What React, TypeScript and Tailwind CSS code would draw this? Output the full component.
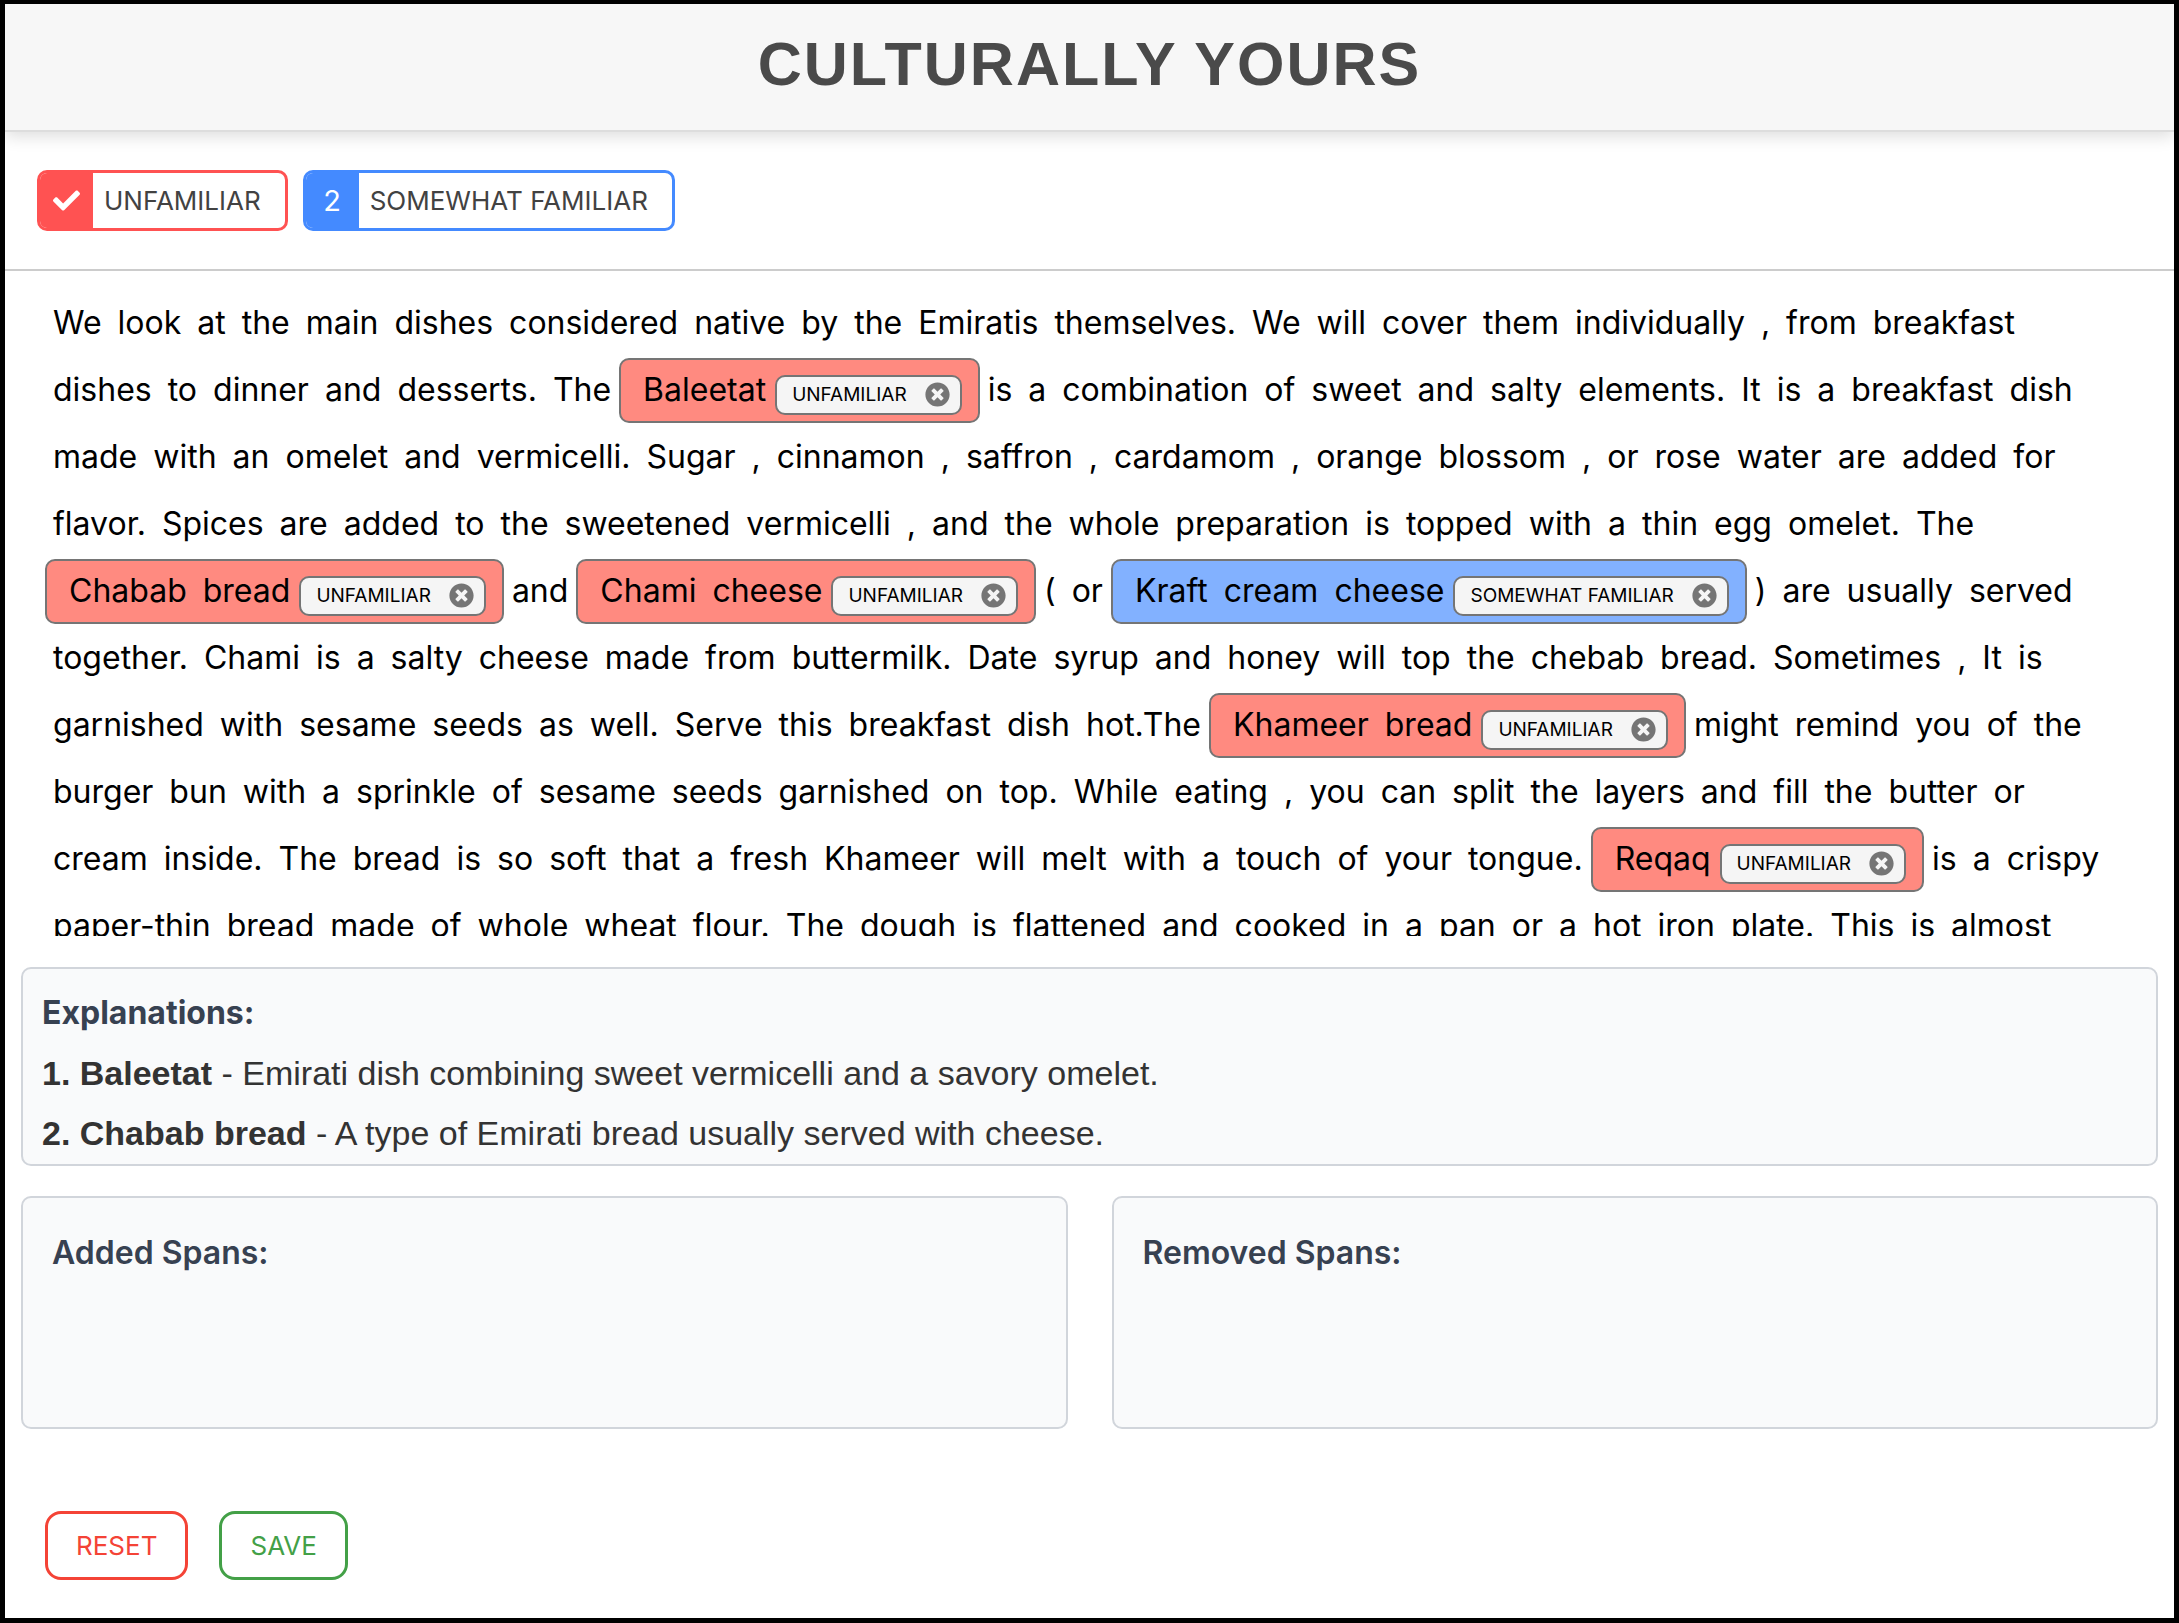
import React from "react";
import { FaCheck, FaTimesCircle } from "react-icons/fa";

type Level = "UNFAMILIAR" | "SOMEWHAT FAMILIAR";
type Segment = string | { text: string; level: Level };

const segments: Segment[] = [
  "We look at the main dishes considered native by the Emiratis themselves. We will cover them individually , from breakfast dishes to dinner and desserts. The",
  { text: "Baleetat", level: "UNFAMILIAR" },
  "is a combination of sweet and salty elements. It is a breakfast dish made with an omelet and vermicelli. Sugar , cinnamon , saffron , cardamom , orange blossom , or rose water are added for flavor. Spices are added to the sweetened vermicelli , and the whole preparation is topped with a thin egg omelet. The",
  { text: "Chabab bread", level: "UNFAMILIAR" },
  "and",
  { text: "Chami cheese", level: "UNFAMILIAR" },
  "( or",
  { text: "Kraft cream cheese", level: "SOMEWHAT FAMILIAR" },
  ") are usually served together. Chami is a salty cheese made from buttermilk. Date syrup and honey will top the chebab bread. Sometimes , It is garnished with sesame seeds as well. Serve this breakfast dish hot.The",
  { text: "Khameer bread", level: "UNFAMILIAR" },
  "might remind you of the burger bun with a sprinkle of sesame seeds garnished on top. While eating , you can split the layers and fill the butter or cream inside. The bread is so soft that a fresh Khameer will melt with a touch of your tongue.",
  { text: "Reqaq", level: "UNFAMILIAR" },
  "is a crispy paper-thin bread made of whole wheat flour. The dough is flattened and cooked in a pan or a hot iron plate. This is almost",
];

function Words({ text }: { text: string }) {
  return (
    <>
      {text.split(" ").map((word, i) => (
        <span key={i} className="px-2">
          {word}
        </span>
      ))}
    </>
  );
}

function Highlight({ text, level }: { text: string; level: Level }) {
  const color = level === "UNFAMILIAR" ? "bg-[#ff8a80]" : "bg-[#82b1ff]";
  return (
    <mark
      className={`mt-[2px] flex h-[65px] items-center rounded-[10px] border-2 border-[#757575] pr-4 pb-[2px] pl-[14px] text-black ${color}`}
    >
      <Words text={text} />
      <span className="mt-[10px] ml-px flex h-10 items-center gap-[18px] rounded-[10px] border-2 border-[#757575] bg-[#f5f5f5] pr-[10px] pl-[15px] text-[19px]">
        {level}
        <button type="button" aria-label={`Remove ${text}`} className="text-[#757575]">
          <FaTimesCircle size={25} />
        </button>
      </span>
    </mark>
  );
}

export default function App() {
  return (
    <div className="flex min-h-screen flex-col border-x-[5px] border-t-4 border-b-[5px] border-black bg-white font-['Inter',sans-serif]">
      <header className="flex h-32 items-center justify-center border-b-2 border-[#dddddd] bg-[#f7f7f7] pb-[6px] shadow-[0_4px_16px_rgba(0,0,0,0.14)]">
        <h1 className="font-['Liberation_Sans',sans-serif] text-[61px] leading-none font-bold tracking-[2px] text-[#4a4a4a]">
          CULTURALLY YOURS
        </h1>
      </header>

      <div className="flex gap-[15px] border-b-2 border-[#cccccc] px-8 py-[38px] text-[26px] text-[#424242]">
        <button
          type="button"
          aria-pressed="true"
          className="flex h-[61px] items-center overflow-hidden rounded-[10px] border-[3px] border-[#ff5252] pr-6"
        >
          <span className="mr-[11px] flex w-[53px] items-center justify-center self-stretch bg-[#ff5252] text-white">
            <FaCheck size={27} />
          </span>
          UNFAMILIAR
        </button>
        <button
          type="button"
          aria-pressed="false"
          className="flex h-[61px] items-center overflow-hidden rounded-[10px] border-[3px] border-[#448aff] pr-6"
        >
          <span className="mr-[11px] flex w-[53px] items-center justify-center self-stretch bg-[#448aff] text-[29px] text-white">
            2
          </span>
          SOMEWHAT FAMILIAR
        </button>
      </div>

      <main className="mt-[18px] mb-[31px] h-[647px] overflow-hidden pr-12 pl-10">
        <div className="flex flex-wrap text-[32px] leading-[67px] text-black">
          {segments.map((s, i) =>
            typeof s === "string" ? <Words key={i} text={s} /> : <Highlight key={i} {...s} />,
          )}
        </div>
      </main>

      <section className="mx-4 h-[199px] overflow-hidden rounded-[10px] border-2 border-[#d1d5db] bg-[#f9fafb] px-[19px] py-[14px] font-['Liberation_Sans',sans-serif] text-[34px] leading-[60px] text-[#333333]">
        <h2 className="font-['Inter',sans-serif] text-[32px] font-bold text-[#374151]">Explanations:</h2>
        <p>
          <b>1. Baleetat</b> - Emirati dish combining sweet vermicelli and a savory omelet.
        </p>
        <p>
          <b>2. Chabab bread</b> - A type of Emirati bread usually served with cheese.
        </p>
      </section>

      <div className="mx-4 mt-[30px] grid grid-cols-2 gap-11 text-[32px] text-[#374151]">
        <section className="h-[233px] rounded-[10px] border-2 border-[#d1d5db] bg-[#f9fafb] px-[29px] py-[31px]">
          <h2 className="font-semibold">Added Spans:</h2>
        </section>
        <section className="h-[233px] rounded-[10px] border-2 border-[#d1d5db] bg-[#f9fafb] px-[29px] py-[31px]">
          <h2 className="font-semibold">Removed Spans:</h2>
        </section>
      </div>

      <footer className="mt-[82px] flex gap-[31px] px-10 text-[26px]">
        <button type="button" className="h-[69px] rounded-[16px] border-[3px] border-[#f44336] px-7 text-[#f44336]">
          RESET
        </button>
        <button type="button" className="h-[69px] rounded-[16px] border-[3px] border-[#43a047] px-7 text-[#43a047]">
          SAVE
        </button>
      </footer>
    </div>
  );
}
